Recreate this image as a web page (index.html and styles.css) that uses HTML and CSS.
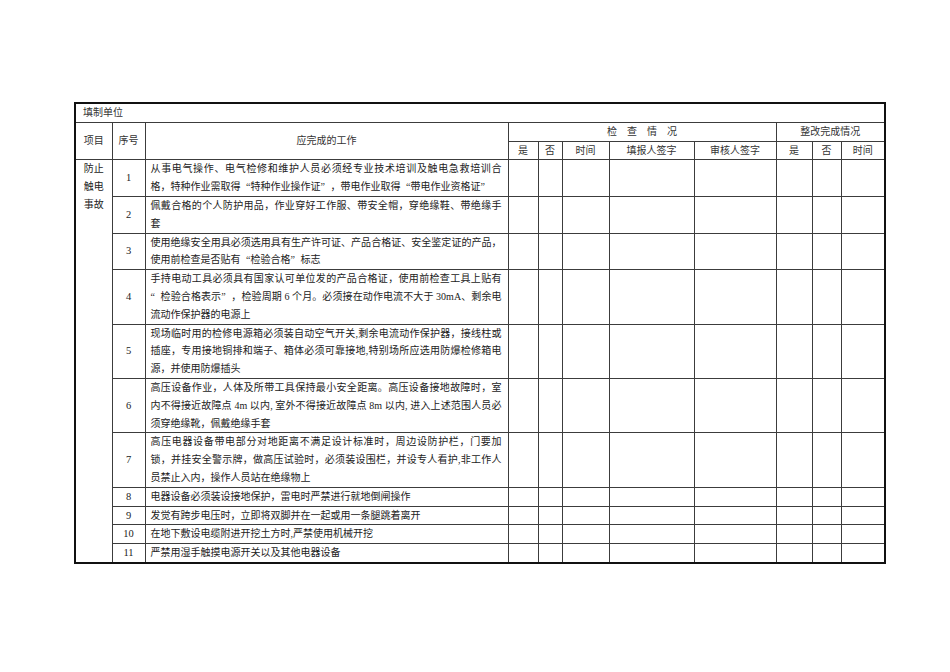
FILE: index.html
```html
<!DOCTYPE html>
<html lang="zh-CN">
<head>
<meta charset="utf-8">
<title>防止触电事故检查表</title>
<link rel="stylesheet" href="styles.css">
</head>
<body>
<div class="page">
<table class="sheet">
  <colgroup>
    <col class="w-item"><col class="w-no"><col class="w-work">
    <col class="w-yes"><col class="w-nob"><col class="w-time"><col class="w-fill"><col class="w-rev">
    <col class="w-yes2"><col class="w-no2"><col class="w-time2">
  </colgroup>
  <tr><td colspan="11" class="unit">填制单位</td></tr>
  <tr>
    <th rowspan="2">项目</th>
    <th rowspan="2">序号</th>
    <th rowspan="2">应完成的工作</th>
    <th colspan="5">检　查　情　况</th>
    <th colspan="3">整改完成情况</th>
  </tr>
  <tr>
    <th>是</th><th>否</th><th>时间</th><th>填报人签字</th><th>审核人签字</th>
    <th>是</th><th>否</th><th>时间</th>
  </tr>
  <tr>
    <td rowspan="11" class="cat">防止<br>触电<br>事故</td>
    <td class="no">1</td>
    <td class="work"><span class="ln full">从事电气操作、电气检修和维护人员必须经专业技术培训及触电急救培训合</span><span class="ln">格，特种作业需取得<span class="q o">“</span>特种作业操作证<span class="q c">”</span>，带电作业取得<span class="q o">“</span>带电作业资格证<span class="q c">”</span></span></td>
    <td></td><td></td><td></td><td></td><td></td><td></td><td></td><td></td>
  </tr>
  <tr>
    <td class="no">2</td>
    <td class="work"><span class="ln full">佩戴合格的个人防护用品，作业穿好工作服、带安全帽，穿绝缘鞋、带绝缘手</span><span class="ln">套</span></td>
    <td></td><td></td><td></td><td></td><td></td><td></td><td></td><td></td>
  </tr>
  <tr>
    <td class="no">3</td>
    <td class="work"><span class="ln full">使用绝缘安全用具必须选用具有生产许可证、产品合格证、安全鉴定证的产品，</span><span class="ln">使用前检查是否贴有<span class="q o">“</span>检验合格<span class="q c">”</span>标志</span></td>
    <td></td><td></td><td></td><td></td><td></td><td></td><td></td><td></td>
  </tr>
  <tr>
    <td class="no">4</td>
    <td class="work"><span class="ln full">手持电动工具必须具有国家认可单位发的产品合格证，使用前检查工具上贴有</span><span class="ln full"><span class="q o">“</span>检验合格表示<span class="q c">”</span>，检验周期 6 个月。必须接在动作电流不大于 30mA、剩余电</span><span class="ln">流动作保护器的电源上</span></td>
    <td></td><td></td><td></td><td></td><td></td><td></td><td></td><td></td>
  </tr>
  <tr>
    <td class="no">5</td>
    <td class="work"><span class="ln full">现场临时用的检修电源箱必须装自动空气开关,剩余电流动作保护器，接线柱或</span><span class="ln full">插座，专用接地铜排和端子、箱体必须可靠接地,特别场所应选用防爆检修箱电</span><span class="ln">源，并使用防爆插头</span></td>
    <td></td><td></td><td></td><td></td><td></td><td></td><td></td><td></td>
  </tr>
  <tr>
    <td class="no">6</td>
    <td class="work"><span class="ln full">高压设备作业，人体及所带工具保持最小安全距离。高压设备接地故障时，室</span><span class="ln full">内不得接近故障点 4m 以内, 室外不得接近故障点 8m 以内, 进入上述范围人员必</span><span class="ln">须穿绝缘靴，佩戴绝缘手套</span></td>
    <td></td><td></td><td></td><td></td><td></td><td></td><td></td><td></td>
  </tr>
  <tr>
    <td class="no">7</td>
    <td class="work"><span class="ln full">高压电器设备带电部分对地距离不满足设计标准时，周边设防护栏，门要加</span><span class="ln full">锁，并挂安全警示牌，做高压试验时，必须装设围栏，并设专人看护,非工作人</span><span class="ln">员禁止入内，操作人员站在绝缘物上</span></td>
    <td></td><td></td><td></td><td></td><td></td><td></td><td></td><td></td>
  </tr>
  <tr>
    <td class="no">8</td>
    <td class="work"><span class="ln">电器设备必须装设接地保护，雷电时严禁进行就地倒闸操作</span></td>
    <td></td><td></td><td></td><td></td><td></td><td></td><td></td><td></td>
  </tr>
  <tr>
    <td class="no">9</td>
    <td class="work"><span class="ln">发觉有跨步电压时，立即将双脚并在一起或用一条腿跳着离开</span></td>
    <td></td><td></td><td></td><td></td><td></td><td></td><td></td><td></td>
  </tr>
  <tr>
    <td class="no">10</td>
    <td class="work"><span class="ln">在地下敷设电缆附进开挖土方时,严禁使用机械开挖</span></td>
    <td></td><td></td><td></td><td></td><td></td><td></td><td></td><td></td>
  </tr>
  <tr>
    <td class="no">11</td>
    <td class="work"><span class="ln">严禁用湿手触摸电源开关以及其他电器设备</span></td>
    <td></td><td></td><td></td><td></td><td></td><td></td><td></td><td></td>
  </tr>
</table>
</div>
</body>
</html>
```
FILE: styles.css
```css
html, body {
  margin: 0;
  padding: 0;
  background: #ffffff;
}

body {
  font-family: "Liberation Serif", "Noto Sans CJK SC", serif;
  color: #222222;
}

.page {
  padding: 102px 0 0 74px;
}

.sheet {
  border-collapse: collapse;
  table-layout: fixed;
  width: 812px;
  border: 2px solid #111111;
  font-size: 10px;
  line-height: 17.8px;
}

.sheet td,
.sheet th {
  border: 1px solid #3c3c3c;
  padding: 0;
  font-weight: normal;
  vertical-align: middle;
}

.sheet th {
  text-align: center;
  color: #333333;
}

.w-item { width: 37px; }
.w-no { width: 33px; }
.w-work { width: 363px; }
.w-yes { width: 30px; }
.w-nob { width: 24px; }
.w-time { width: 47px; }
.w-fill { width: 85px; }
.w-rev { width: 82px; }
.w-yes2 { width: 36px; }
.w-no2 { width: 29px; }
.w-time2 { width: 44px; }

.unit {
  text-align: left;
  padding-left: 7px !important;
  color: #333333;
}

.cat {
  vertical-align: top !important;
  text-align: center;
}

.no {
  text-align: center;
  font-size: 10.5px;
}

.work {
  padding: 0 6px 0 5px !important;
  text-align: left;
}

.ln {
  display: block;
}

.ln.full {
  text-align: justify;
  text-align-last: justify;
}

.q {
  display: inline-block;
  width: 1em;
  line-height: 10px;
}

.q.o {
  text-align: right;
}

.q.c {
  text-align: left;
}
```
